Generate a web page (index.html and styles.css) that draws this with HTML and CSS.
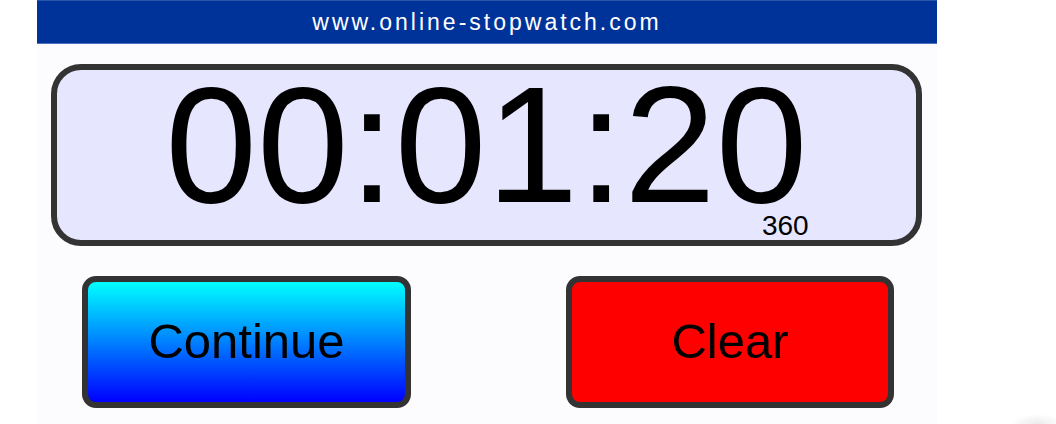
FILE: index.html
```html
<!DOCTYPE html>
<html>
<head>
<meta charset="utf-8">
<link rel="stylesheet" href="styles.css">
</head>
<body>
<div class="app">
  <div class="header">www.online-stopwatch.com</div>
  <div class="display">
    <div class="time">00:01:20<span class="ms">360</span></div>
  </div>
  <div class="buttons">
    <div class="btn btn-continue">Continue</div>
    <div class="btn btn-clear">Clear</div>
  </div>
</div>
<div class="smudge"></div>
</body>
</html>
```
FILE: styles.css
```css
html, body {
  margin: 0;
  padding: 0;
  background: #ffffff;
  overflow: hidden;
}
body {
  width: 1056px;
  height: 424px;
  position: relative;
  font-family: "Liberation Sans", Arial, sans-serif;
}
.app {
  margin-left: 37px;
  width: 900px;
  height: 424px;
  background: #fcfcff;
  display: flex;
  flex-direction: column;
}
.header {
  height: 44px;
  box-sizing: border-box;
  background: #003399;
  border-top: 1px solid #2a55a8;
  border-bottom: 1px solid #4a6fc0;
  color: #ffffff;
  font-size: 23px;
  letter-spacing: 3px;
  line-height: 42px;
  text-align: center;
  flex: none;
}
.display {
  margin: 20px 0 0 14px;
  width: 871px;
  height: 182px;
  box-sizing: border-box;
  border: 6px solid #333333;
  border-radius: 30px;
  background: #e6e6ff;
  display: flex;
  justify-content: center;
  flex: none;
}
.time {
  position: relative;
  font-size: 165px;
  line-height: 0.8;
  color: #000;
  margin-top: 9px;
  height: 132px;
}
.ms {
  position: absolute;
  right: -1px;
  top: 133px;
  font-size: 28px;
  line-height: 1;
}
.buttons {
  display: flex;
  gap: 155px;
  padding-left: 45px;
  margin-top: 30px;
}
.btn {
  width: 329px;
  height: 132px;
  box-sizing: border-box;
  border: 6px solid #333333;
  border-radius: 14px;
  display: flex;
  align-items: center;
  justify-content: center;
  font-size: 49px;
  color: #000;
  padding-bottom: 2px;
}
.btn-continue {
  background: linear-gradient(to bottom, #00ffff 0%, #0080ff 50%, #0000ff 100%);
}
.btn-clear {
  background: #ff0000;
  width: 328px;
}
.smudge {
  position: absolute;
  right: 0;
  bottom: 0;
  width: 46px;
  height: 10px;
  background: radial-gradient(ellipse at 60% 100%, rgba(0,0,0,0.08), rgba(0,0,0,0) 70%);
}
```
